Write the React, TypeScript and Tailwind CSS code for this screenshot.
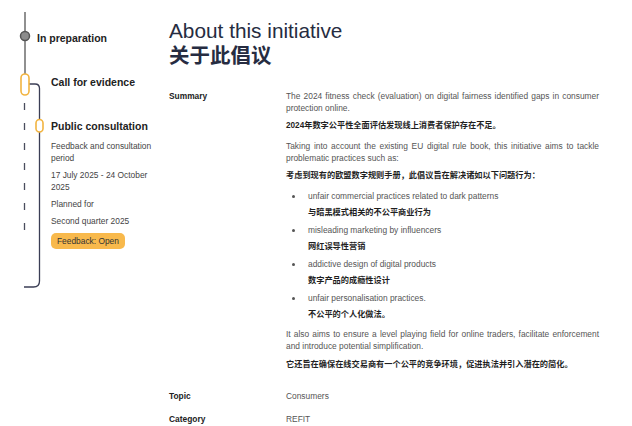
import React from "react";

const latin = "font-['Liberation_Sans','Noto_Sans_CJK_SC',sans-serif]";

function Timeline() {
  return (
    <svg
      className="pointer-events-none absolute left-0 top-0"
      width="60"
      height="300"
      viewBox="0 0 60 300"
      fill="none"
    >
      <line x1="25" y1="12" x2="25" y2="74" stroke="#6b6b6b" strokeWidth="1.5" />
      <circle cx="25" cy="36" r="4.5" fill="#8c8c8c" stroke="#555" strokeWidth="1.5" />
      <path d="M29 84 H35 Q39.5 84 39.5 88.5 V119" stroke="#3b3e55" strokeWidth="1.3" />
      <rect x="21" y="74" width="8" height="21" rx="4" fill="#fff" stroke="#f2b440" strokeWidth="1.6" />
      <line x1="24.5" y1="103" x2="24.5" y2="242" stroke="#4a4d5e" strokeWidth="1.3" strokeDasharray="7 13" />
      <path d="M39.5 132 V281 Q39.5 287 33.5 287 H24" stroke="#3b3e55" strokeWidth="1.3" />
      <rect x="36" y="119.5" width="7" height="12.5" rx="3.5" fill="#fff" stroke="#f2b440" strokeWidth="1.6" />
    </svg>
  );
}

function En({ children, className = "" }: { children: React.ReactNode; className?: string }) {
  return <p className={`text-justify text-[8.4px] leading-[12px] text-[#555] ${className}`}>{children}</p>;
}

function Zh({ children, className = "" }: { children: React.ReactNode; className?: string }) {
  return <p className={`text-[8.2px] font-bold leading-[12px] text-[#1f1f1f] ${className}`}>{children}</p>;
}

function Bullet({ en, zh, first }: { en: string; zh: string; first?: boolean }) {
  return (
    <li className={`flex ${first ? "mt-[8px]" : "mt-[5px]"}`}>
      <span className="mt-[5px] ml-[6px] mr-[13px] h-[3px] w-[3px] shrink-0 rounded-full bg-[#555]" />
      <div>
        <En>{en}</En>
        <Zh className="mt-[5px]">{zh}</Zh>
      </div>
    </li>
  );
}

function Row({ label, children, className = "" }: { label: string; children: React.ReactNode; className?: string }) {
  return (
    <div className={`flex ${className}`}>
      <div className="w-[117px] shrink-0 text-[8.4px] font-bold leading-[12px] text-[#222]">{label}</div>
      <div className="w-[313px]">{children}</div>
    </div>
  );
}

export default function App() {
  return (
    <div className={`flex h-[426px] w-[632px] overflow-hidden bg-white ${latin}`}>
      <div className="relative w-[169px] shrink-0">
        <Timeline />
        <div className="pl-[37px] pt-[31px] text-[10.5px] font-bold leading-[14px] text-[#222]">In preparation</div>
        <div className="mt-[30px] pl-[51px] text-[10.5px] font-bold leading-[14px] text-[#222]">Call for evidence</div>
        <div className="mt-[30px] w-[160px] pl-[51px]">
          <div className="text-[10.5px] font-bold leading-[14px] text-[#222]">Public consultation</div>
          <div className="text-[8.4px] leading-[12px] text-[#444]">
            <p className="mt-[7px]">Feedback and consultation period</p>
            <p className="mt-[5px]">17 July 2025 - 24 October 2025</p>
            <p className="mt-[5px]">Planned for</p>
            <p className="mt-[5px]">Second quarter 2025</p>
          </div>
          <span className="mt-[5px] inline-flex h-[16px] items-center rounded-[5px] bg-[#f8b94c] px-[6px] text-[8.4px] text-[#333]">
            Feedback: Open
          </span>
        </div>
      </div>

      <div className="pt-[18px]">
        <h1 className="text-[20.8px] font-normal leading-[25px] text-[#262c41]">About this initiative</h1>
        <h2 className="text-[20.5px] font-bold leading-[25px] text-[#262c41]">关于此倡议</h2>

        <Row label="Summary" className="mt-[22px]">
          <En>The 2024 fitness check (evaluation) on digital fairness identified gaps in consumer protection online.</En>
          <Zh className="mt-[6px]">2024年数字公平性全面评估发现线上消费者保护存在不足。</Zh>
          <En className="mt-[8px]">
            Taking into account the existing EU digital rule book, this initiative aims to tackle problematic practices such as:
          </En>
          <Zh className="mt-[6px]">考虑到现有的欧盟数字规则手册，此倡议旨在解决诸如以下问题行为：</Zh>
          <ul>
            <Bullet first en="unfair commercial practices related to dark patterns" zh="与暗黑模式相关的不公平商业行为" />
            <Bullet en="misleading marketing by influencers" zh="网红误导性营销" />
            <Bullet en="addictive design of digital products" zh="数字产品的成瘾性设计" />
            <Bullet en="unfair personalisation practices." zh="不公平的个人化做法。" />
          </ul>
          <En className="mt-[7px]">
            It also aims to ensure a level playing field for online traders, facilitate enforcement and introduce potential simplification.
          </En>
          <Zh className="mt-[7px]">它还旨在确保在线交易商有一个公平的竞争环境，促进执法并引入潜在的简化。</Zh>
        </Row>

        <Row label="Topic" className="mt-[19px]">
          <En>Consumers</En>
        </Row>
        <Row label="Category" className="mt-[11px]">
          <En>REFIT</En>
        </Row>
      </div>
    </div>
  );
}
